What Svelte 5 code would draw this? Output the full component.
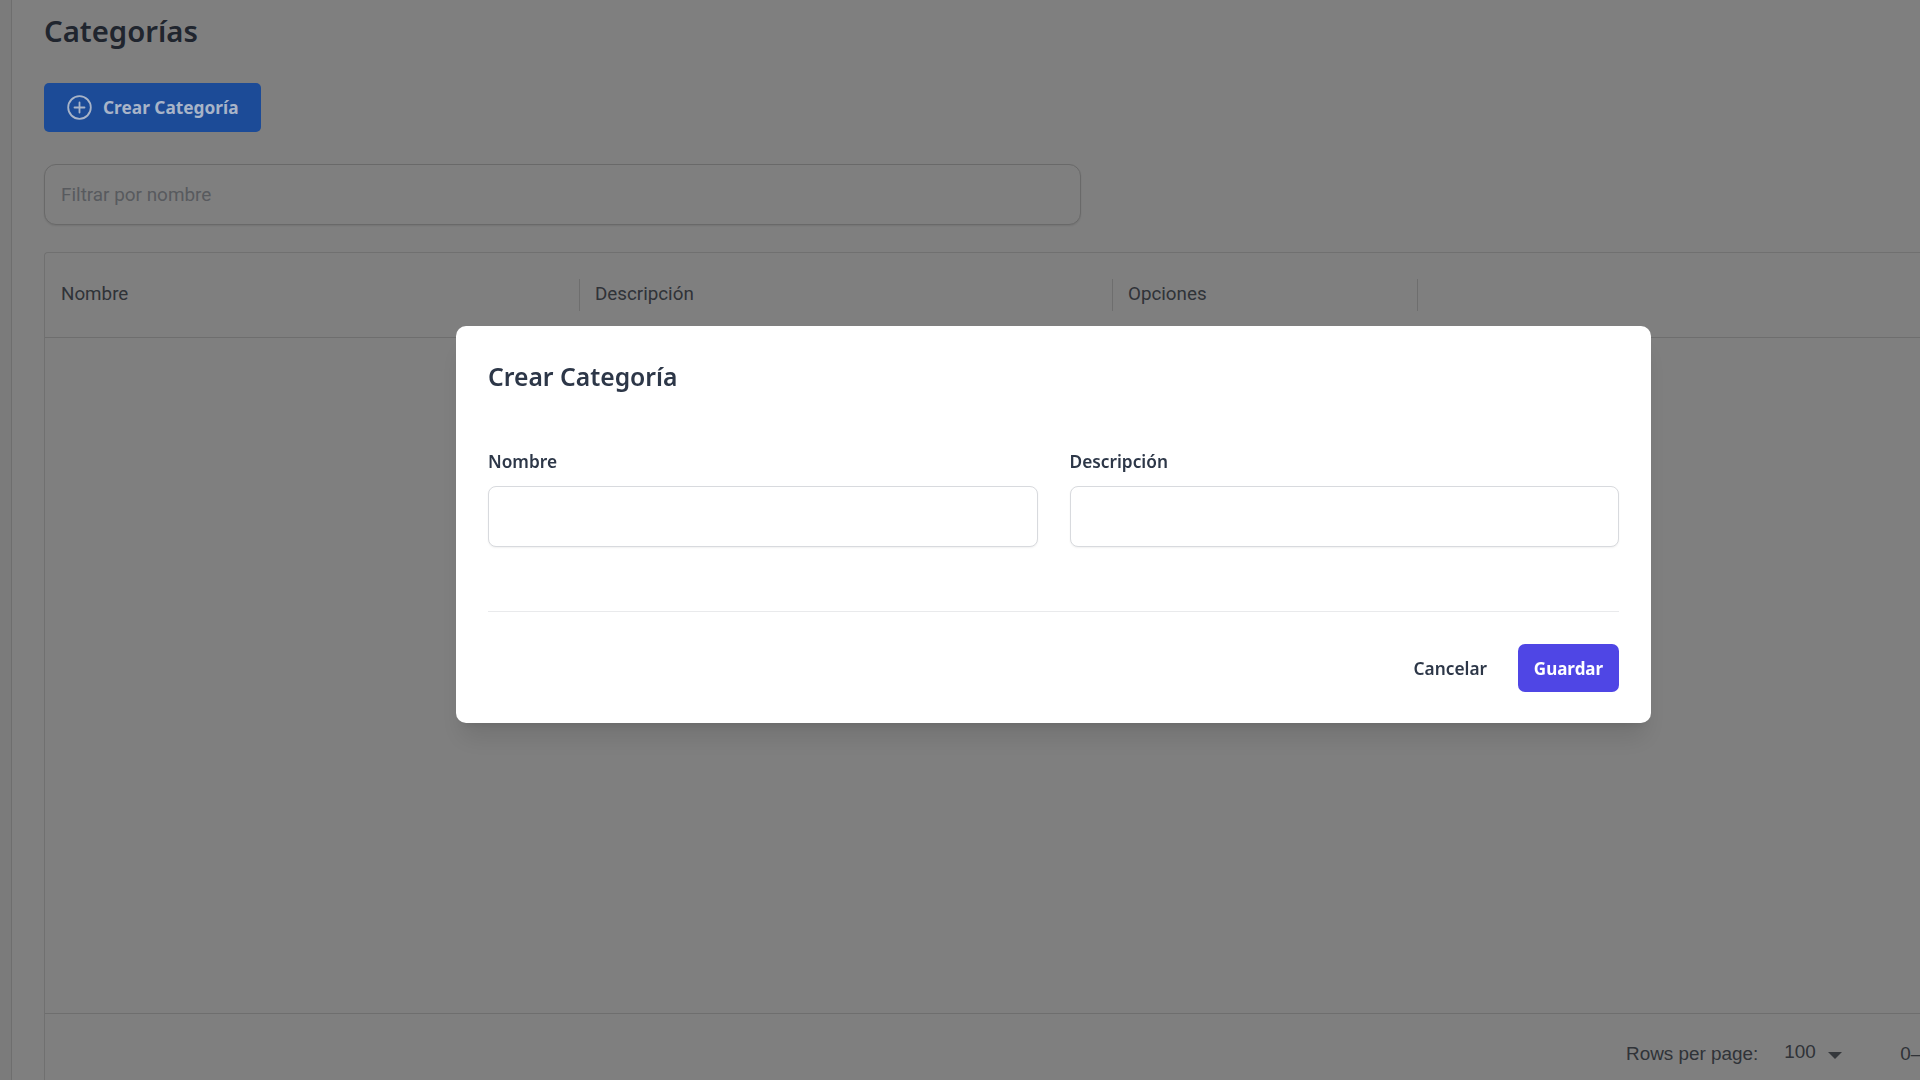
<script>
  let nombre = $state('');
  let descripcion = $state('');
  const columns = ['Nombre', 'Descripción', 'Opciones'];
</script>

<div class="page">
  <aside class="rail"></aside>
  <main class="content">
    <h1>Categorías</h1>
    <button class="create">
      <svg width="25" height="25" viewBox="0 0 25 25" fill="none" stroke="currentColor" stroke-width="1.8" stroke-linecap="round">
        <circle cx="12.5" cy="12.5" r="11.3" />
        <path d="M12.5 7.5v10M7.5 12.5h10" />
      </svg>
      Crear Categoría
    </button>
    <input class="filter" placeholder="Filtrar por nombre" />

    <section class="grid">
      <div class="head">
        {#each columns as col}
          <div class="col">{col}</div>
        {/each}
      </div>
      <div class="body"></div>
      <div class="foot">
        <span class="rows">Rows per page:</span>
        <span class="size">100</span>
        <span class="caret"></span>
        <span class="range">0–0 of 0</span>
      </div>
    </section>
  </main>
</div>

<div class="overlay">
  <div class="modal">
    <h2>Crear Categoría</h2>
    <div class="fields">
      <label>
        <span>Nombre</span>
        <input bind:value={nombre} />
      </label>
      <label>
        <span>Descripción</span>
        <input bind:value={descripcion} />
      </label>
    </div>
    <hr />
    <div class="actions">
      <button class="cancel">Cancelar</button>
      <button class="save">Guardar</button>
    </div>
  </div>
</div>

<style>
  :global(body) {
    background: #fff;
    overflow: hidden;
  }

  .page {
    display: flex;
    height: 1080px;
    overflow: hidden;
    font-family: 'Noto Sans', 'Open Sans', sans-serif;
    color: #404a5c;
  }

  .rail {
    flex: none;
    width: 12px;
    background: #f6f6f6;
    border-right: 1px solid #dcdcdc;
    box-sizing: border-box;
  }

  .content {
    flex: none;
    width: 1960px;
    padding: 0 0 0 32px;
    box-sizing: border-box;
    display: flex;
    flex-direction: column;
    align-items: flex-start;
  }

  h1 {
    flex: none;
    margin: 11px 0 0;
    font-size: 29.3px;
    line-height: 40px;
    font-weight: 600;
  }

  /* stays bright through the backdrop */
  .create {
    flex: none;
    position: relative;
    z-index: 2;
    margin-top: 32px;
    width: 217px;
    height: 49px;
    padding: 0 0 0 23px;
    display: flex;
    align-items: center;
    gap: 11px;
    background: #1c4b97;
    border: 0;
    border-radius: 5px;
    color: #a8b4c8;
    font-family: inherit;
    font-size: 17.3px;
    font-weight: 700;
  }

  .filter {
    flex: none;
    margin-top: 32px;
    width: 1037px;
    height: 61px;
    padding: 0 16px;
    box-sizing: border-box;
    border: 1px solid #d2d2d2;
    border-radius: 12px;
    background: #fff;
    box-shadow: 0 1px 2px rgba(0, 0, 0, 0.1);
    font-family: Roboto, sans-serif;
    font-size: 18.9px;
  }

  .filter::placeholder {
    color: #b0b5bd;
    opacity: 1;
  }

  .grid {
    margin-top: 27px;
    flex: none;
    width: 100%;
    display: flex;
    flex-direction: column;
    border-top: 1px solid #e0e0e0;
    border-left: 1px solid #e0e0e0;
    border-radius: 4px 0 0 0;
    box-sizing: border-box;
    font-family: Roboto, sans-serif;
  }

  .head {
    flex: none;
    height: 84px;
    display: flex;
    align-items: center;
    border-bottom: 1px solid #dcdcdc;
    font-size: 18.8px;
    color: #606670;
  }

  .col {
    width: 533px;
    height: 32px;
    padding-left: 15px;
    box-sizing: border-box;
    line-height: 31px;
    border-right: 1px solid #dcdcdc;
  }

  .col:first-child {
    width: 535px;
    padding-left: 16px;
  }

  .col:last-child {
    width: 305px;
  }

  .body {
    flex: none;
    height: 675px;
    border-bottom: 1px solid #dcdcdc;
  }

  .foot {
    flex: none;
    display: flex;
    align-items: center;
    height: 79px;
    padding-left: 1581px;
    font-family: 'Liberation Sans', Arial, sans-serif;
    font-size: 18.9px;
    color: #606670;
    white-space: nowrap;
  }

  .size {
    margin-left: 26px;
    margin-top: -3px;
    width: 44px;
  }

  .caret {
    width: 0;
    height: 0;
    border-left: 7px solid transparent;
    border-right: 7px solid transparent;
    border-top: 7px solid #6b7078;
    margin-top: 3px;
  }

  .range {
    margin-left: 58px;
  }

  .overlay {
    position: fixed;
    inset: 0;
    z-index: 1;
    background: rgba(0, 0, 0, 0.5);
    padding: 326px 0 0 456px;
    box-sizing: border-box;
    font-family: 'Noto Sans', 'Open Sans', sans-serif;
  }

  .modal {
    width: 1195px;
    height: 397px;
    padding: 0 32px;
    box-sizing: border-box;
    background: #fff;
    border-radius: 10px;
    box-shadow: 0 20px 25px -5px rgba(0, 0, 0, 0.1), 0 8px 10px -6px rgba(0, 0, 0, 0.1);
    color: #2d3748;
    display: flex;
    flex-direction: column;
  }

  h2 {
    margin: 32px 0 0;
    font-size: 24.7px;
    line-height: 38px;
    font-weight: 600;
  }

  .fields {
    margin-top: 54px;
    display: grid;
    grid-template-columns: 1fr 1fr;
    gap: 32px;
  }

  label {
    display: flex;
    flex-direction: column;
    gap: 12px;
    font-size: 17.3px;
    font-weight: 600;
    line-height: 24px;
  }

  label input {
    height: 61px;
    border: 1px solid #d8dade;
    border-radius: 8px;
    box-sizing: border-box;
    background: #fff;
    padding: 0 12px;
    box-shadow: 0 1px 2px rgba(0, 0, 0, 0.06);
  }

  hr {
    margin: 64px 0 0;
    border: 0;
    border-top: 1px solid #e9eaec;
  }

  .actions {
    margin-top: 32px;
    display: flex;
    justify-content: flex-end;
    align-items: center;
    gap: 31px;
  }

  .actions button {
    height: 48px;
    border: 0;
    font-family: inherit;
  }

  .cancel {
    background: transparent;
    padding: 0;
    color: #2d3748;
    font-size: 17.3px;
    font-weight: 600;
  }

  .save {
    width: 101px;
    padding: 0;
    background: #4f46e5;
    border-radius: 7px;
    color: #fff;
    font-size: 17px;
    font-weight: 700;
  }
</style>
